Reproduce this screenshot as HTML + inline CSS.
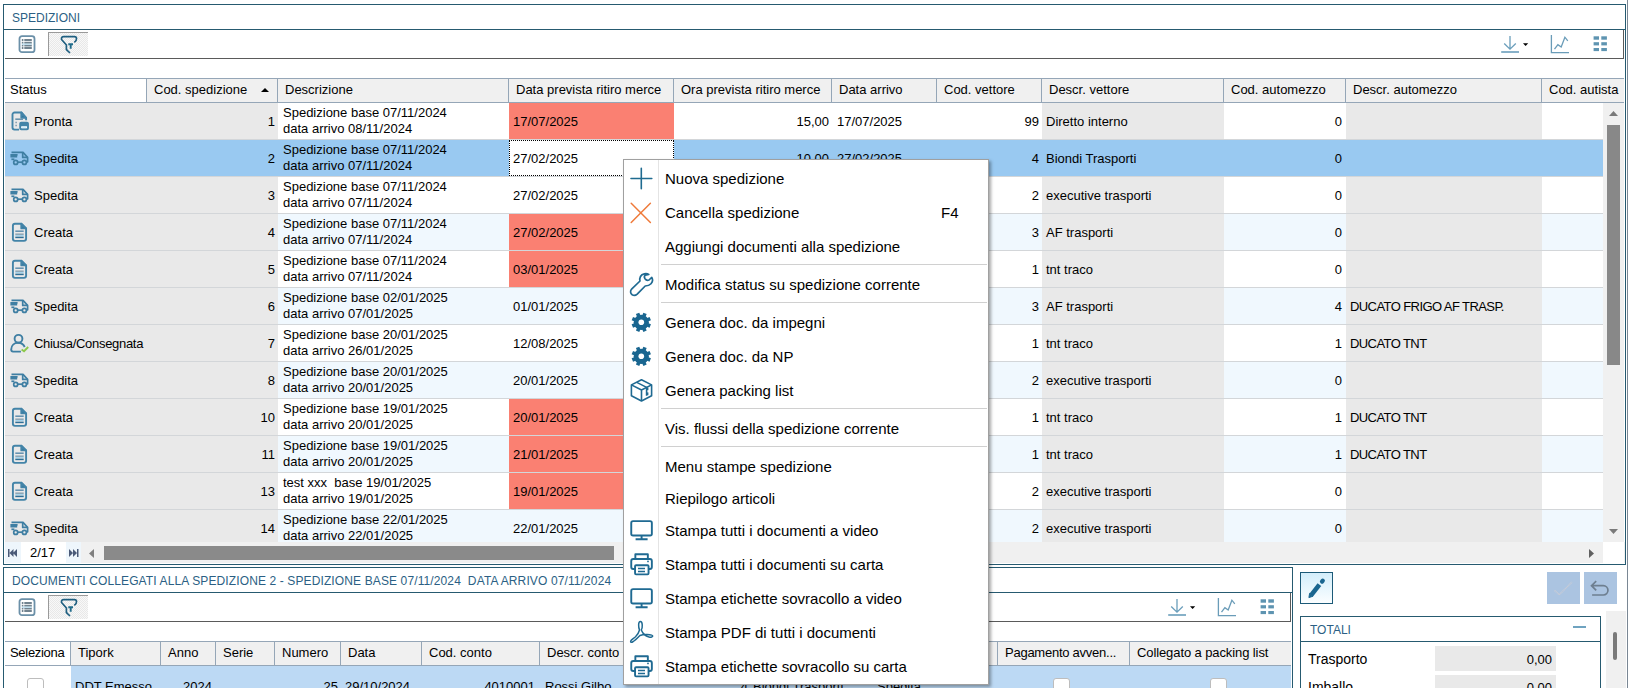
<!DOCTYPE html><html><head><meta charset="utf-8"><style>
html,body{margin:0;padding:0}
body{width:1631px;height:688px;overflow:hidden;position:relative;background:#fff;font-family:"Liberation Sans",sans-serif}
.t{position:absolute;white-space:pre;line-height:1}
.b{position:absolute;box-sizing:border-box}
svg{position:absolute;overflow:visible}
</style></head><body>
<div class="b" style="left:3px;top:4px;width:1623px;height:561px;border:1px solid #265a70"></div>
<div class="t" style="left:12px;top:11.84px;font-size:12px;color:#2b5f84;">SPEDIZIONI</div>
<div class="b" style="left:4px;top:29px;width:1621px;height:1px;background:#265a70"></div>
<div class="b" style="left:5px;top:58px;width:1619px;height:1px;background:#5a5a5a"></div>
<div class="b" style="left:1623px;top:30px;width:1px;height:29px;background:#5a5a5a"></div>
<div class="b" style="left:1627px;top:0px;width:1px;height:688px;background:#7a8794"></div>
<svg style="left:18px;top:35px" width="18" height="18" viewBox="0 0 18 18"><rect x="1.5" y="1.2" width="15" height="16" rx="2.5" fill="none" stroke="#6b90a8" stroke-width="1.8"/><g fill="#72838f"><rect x="3.8" y="4" width="1.6" height="2"/><rect x="6.3" y="4" width="7.5" height="2"/><rect x="3.8" y="6.8" width="1.6" height="1.9"/><rect x="6.3" y="6.8" width="7.5" height="1.9"/><rect x="3.8" y="9.6" width="1.6" height="1.9"/><rect x="6.3" y="9.6" width="7.5" height="1.9"/><rect x="3.8" y="12" width="1.6" height="2"/><rect x="6.3" y="12" width="7.5" height="2"/></g><rect x="4" y="8.6" width="9.5" height="1.2" fill="#bfe3f5"/></svg>
<div class="b" style="left:48px;top:32px;width:40px;height:24px;border-left:1px solid #9a9a9a;border-top:1px solid #9a9a9a;background-color:#f8f8f8;background-image:linear-gradient(45deg,#e8e8e8 25%,transparent 25%,transparent 75%,#e8e8e8 75%),linear-gradient(45deg,#e8e8e8 25%,transparent 25%,transparent 75%,#e8e8e8 75%);background-size:2px 2px;background-position:0 0,1px 1px"></div>
<svg style="left:60px;top:35px" width="18" height="19" viewBox="0 0 18 19"><path d="M6.4 15V10L1.8 4.8C1.2 4 1.2 1.6 3.5 1.6H14.5C17 1.6 17.5 5 14.3 7.4" fill="none" stroke="#1f5f80" stroke-width="1.7"/><path d="M6.4 14.6L10 18" fill="none" stroke="#1f5f80" stroke-width="1.7"/><path d="M8.3 9.3H13M10.7 9.3V13.8" fill="none" stroke="#1f6b8a" stroke-width="1.9"/></svg>
<svg style="left:1500px;top:35px" width="30" height="20" viewBox="0 0 30 20"><g fill="none" stroke="#6a9ebb" stroke-width="1.3"><path d="M10 1V14M4.2 8.5L10 14.2 15.8 8.5"/><path d="M1.2 17H19" stroke-width="1.6"/></g><path d="M23 8.2H28.2L25.6 11z" fill="#000"/></svg>
<svg style="left:1550px;top:35px" width="20" height="20" viewBox="0 0 20 20"><g fill="none" stroke="#6a9cb8" stroke-width="1.3"><path d="M1.4 0V17.6H19"/><path d="M4.5 14.2L7.9 9.6 11.2 12 14.9 2.2 17.8 5.8"/></g></svg>
<svg style="left:1593px;top:36px" width="15" height="16" viewBox="0 0 15 16"><g fill="#5e94b1"><rect x="0.6" y="0.3" width="5.4" height="3.4"/><rect x="8.3" y="0.3" width="5.6" height="3.4"/><rect x="0.6" y="6.2" width="5.4" height="3.2"/><rect x="8.3" y="6.2" width="5.6" height="3.2"/><rect x="0.6" y="12" width="5.4" height="3.1"/><rect x="8.3" y="12" width="5.6" height="3.1"/></g></svg>
<div class="b" style="left:5px;top:78px;width:1619px;height:25px;background:#f0f0f0;border-top:1px solid #95a6b7;border-bottom:1px solid #95a6b7"></div>
<div class="b" style="left:5px;top:79px;width:142px;height:23px;background:#fff"></div>
<div class="b" style="left:146px;top:79px;width:1px;height:23px;background:#95a6b7"></div>
<div class="b" style="left:277px;top:79px;width:1px;height:23px;background:#95a6b7"></div>
<div class="b" style="left:508px;top:79px;width:1px;height:23px;background:#95a6b7"></div>
<div class="b" style="left:673px;top:79px;width:1px;height:23px;background:#95a6b7"></div>
<div class="b" style="left:831px;top:79px;width:1px;height:23px;background:#95a6b7"></div>
<div class="b" style="left:936px;top:79px;width:1px;height:23px;background:#95a6b7"></div>
<div class="b" style="left:1041px;top:79px;width:1px;height:23px;background:#95a6b7"></div>
<div class="b" style="left:1223px;top:79px;width:1px;height:23px;background:#95a6b7"></div>
<div class="b" style="left:1345px;top:79px;width:1px;height:23px;background:#95a6b7"></div>
<div class="b" style="left:1541px;top:79px;width:1px;height:23px;background:#95a6b7"></div>
<div class="t" style="left:10px;top:83.00px;font-size:13px;color:#000;">Status</div>
<div class="t" style="left:154px;top:83.00px;font-size:13px;color:#000;">Cod. spedizione</div>
<div class="t" style="left:285px;top:83.00px;font-size:13px;color:#000;">Descrizione</div>
<div class="t" style="left:516px;top:83.00px;font-size:13px;color:#000;">Data prevista ritiro merce</div>
<div class="t" style="left:681px;top:83.00px;font-size:13px;color:#000;">Ora prevista ritiro merce</div>
<div class="t" style="left:839px;top:83.00px;font-size:13px;color:#000;">Data arrivo</div>
<div class="t" style="left:944px;top:83.00px;font-size:13px;color:#000;">Cod. vettore</div>
<div class="t" style="left:1049px;top:83.00px;font-size:13px;color:#000;">Descr. vettore</div>
<div class="t" style="left:1231px;top:83.00px;font-size:13px;color:#000;">Cod. automezzo</div>
<div class="t" style="left:1353px;top:83.00px;font-size:13px;color:#000;">Descr. automezzo</div>
<div class="t" style="left:1549px;top:83.00px;font-size:13px;color:#000;">Cod. autista</div>
<svg style="left:261px;top:88px" width="8" height="4"><path d="M0 4 L4 0 L8 4Z" fill="#000"/></svg>
<div class="b" style="left:5px;top:103px;width:273px;height:36px;background:#e9e9e9"></div>
<div class="b" style="left:278px;top:103px;width:396px;height:36px;background:#fff"></div>
<div class="b" style="left:509px;top:103px;width:165px;height:36px;background:#fa8072"></div>
<div class="b" style="left:674px;top:103px;width:368px;height:36px;background:#fff"></div>
<div class="b" style="left:1042px;top:103px;width:182px;height:36px;background:#e9e9e9"></div>
<div class="b" style="left:1224px;top:103px;width:122px;height:36px;background:#fff"></div>
<div class="b" style="left:1346px;top:103px;width:196px;height:36px;background:#e9e9e9"></div>
<div class="b" style="left:1542px;top:103px;width:62px;height:36px;background:#fff"></div>
<svg style="left:8px;top:108px" width="24" height="24" viewBox="0 0 24 24"><g fill="none" stroke="#4384a8" stroke-width="1.9" stroke-linejoin="round"><path d="M11 21.6H6.6A2.1 2.1 0 0 1 4.5 19.5V6.6A2.1 2.1 0 0 1 6.6 4.5H13.3L18.1 9.8V12.2"/><path d="M13.3 4.5V9.8H18.1Z" fill="#2b6f98"/><path d="M7.3 11.2H15" stroke="#6a94ae" stroke-width="1.6"/><path d="M7.3 14.6H9M7.3 17.6H9" stroke="#8aa4b4" stroke-width="1.5"/><rect x="12.2" y="14.6" width="7.8" height="6.6" rx="1" fill="#fff"/><path d="M12.2 16.5H20" stroke-width="3.6"/></g><rect x="14" y="18.6" width="4.3" height="1.6" fill="#d9f0fb"/></svg>
<div class="t" style="left:34px;top:114.50px;font-size:13px;color:#000;">Pronta</div>
<div class="t" style="right:1356px;top:114.50px;font-size:13px;color:#000;">1</div>
<div class="t" style="left:283px;top:105.60px;font-size:13px;color:#000;">Spedizione base 07/11/2024</div>
<div class="t" style="left:283px;top:121.90px;font-size:13px;color:#000;">data arrivo 08/11/2024</div>
<div class="t" style="left:513px;top:114.50px;font-size:13px;color:#000;">17/07/2025</div>
<div class="t" style="right:802px;top:114.50px;font-size:13px;color:#000;">15,00</div>
<div class="t" style="left:837px;top:114.50px;font-size:13px;color:#000;">17/07/2025</div>
<div class="t" style="right:592px;top:114.50px;font-size:13px;color:#000;">99</div>
<div class="t" style="left:1046px;top:114.50px;font-size:13px;color:#000;">Diretto interno</div>
<div class="t" style="right:289px;top:114.50px;font-size:13px;color:#000;">0</div>
<div class="b" style="left:5px;top:140px;width:1599px;height:36px;background:#99c9f1"></div>
<div class="b" style="left:509px;top:140px;width:165px;height:36px;background:#fff;border:1px dotted #000"></div>
<div class="b" style="left:5px;top:139px;width:1599px;height:1px;background:#d3d6d9"></div>
<svg style="left:8px;top:146px" width="24" height="24" viewBox="0 0 24 24"><g fill="none" stroke="#3f7fa3" stroke-width="1.7" stroke-linejoin="round"><path d="M3.5 6.3H15L19.6 11.3V15.8H18.6"/><path d="M14.7 6.6V11.4H19.3"/><path d="M2.4 8.9H9.6M2.4 10.6H9.2" stroke-width="1.6"/><path d="M3.4 13.3H6.4"/><circle cx="7.7" cy="16.4" r="2"/><circle cx="16.4" cy="16.4" r="2"/><path d="M9.7 16.2H14.4"/></g></svg>
<div class="t" style="left:34px;top:151.50px;font-size:13px;color:#000;">Spedita</div>
<div class="t" style="right:1356px;top:151.50px;font-size:13px;color:#000;">2</div>
<div class="t" style="left:283px;top:142.60px;font-size:13px;color:#000;">Spedizione base 07/11/2024</div>
<div class="t" style="left:283px;top:158.90px;font-size:13px;color:#000;">data arrivo 07/11/2024</div>
<div class="t" style="left:513px;top:151.50px;font-size:13px;color:#000;">27/02/2025</div>
<div class="t" style="right:802px;top:151.50px;font-size:13px;color:#000;">10,00</div>
<div class="t" style="left:837px;top:151.50px;font-size:13px;color:#000;">27/02/2025</div>
<div class="t" style="right:592px;top:151.50px;font-size:13px;color:#000;">4</div>
<div class="t" style="left:1046px;top:151.50px;font-size:13px;color:#000;">Biondi Trasporti</div>
<div class="t" style="right:289px;top:151.50px;font-size:13px;color:#000;">0</div>
<div class="b" style="left:5px;top:177px;width:273px;height:36px;background:#e9e9e9"></div>
<div class="b" style="left:278px;top:177px;width:396px;height:36px;background:#fff"></div>
<div class="b" style="left:674px;top:177px;width:368px;height:36px;background:#fff"></div>
<div class="b" style="left:1042px;top:177px;width:182px;height:36px;background:#e9e9e9"></div>
<div class="b" style="left:1224px;top:177px;width:122px;height:36px;background:#fff"></div>
<div class="b" style="left:1346px;top:177px;width:196px;height:36px;background:#e9e9e9"></div>
<div class="b" style="left:1542px;top:177px;width:62px;height:36px;background:#fff"></div>
<div class="b" style="left:5px;top:176px;width:1599px;height:1px;background:#d3d6d9"></div>
<svg style="left:8px;top:183px" width="24" height="24" viewBox="0 0 24 24"><g fill="none" stroke="#3f7fa3" stroke-width="1.7" stroke-linejoin="round"><path d="M3.5 6.3H15L19.6 11.3V15.8H18.6"/><path d="M14.7 6.6V11.4H19.3"/><path d="M2.4 8.9H9.6M2.4 10.6H9.2" stroke-width="1.6"/><path d="M3.4 13.3H6.4"/><circle cx="7.7" cy="16.4" r="2"/><circle cx="16.4" cy="16.4" r="2"/><path d="M9.7 16.2H14.4"/></g></svg>
<div class="t" style="left:34px;top:188.50px;font-size:13px;color:#000;">Spedita</div>
<div class="t" style="right:1356px;top:188.50px;font-size:13px;color:#000;">3</div>
<div class="t" style="left:283px;top:179.60px;font-size:13px;color:#000;">Spedizione base 07/11/2024</div>
<div class="t" style="left:283px;top:195.90px;font-size:13px;color:#000;">data arrivo 07/11/2024</div>
<div class="t" style="left:513px;top:188.50px;font-size:13px;color:#000;">27/02/2025</div>
<div class="t" style="right:592px;top:188.50px;font-size:13px;color:#000;">2</div>
<div class="t" style="left:1046px;top:188.50px;font-size:13px;color:#000;">executive trasporti</div>
<div class="t" style="right:289px;top:188.50px;font-size:13px;color:#000;">0</div>
<div class="b" style="left:5px;top:214px;width:273px;height:36px;background:#e9e9e9"></div>
<div class="b" style="left:278px;top:214px;width:396px;height:36px;background:#f0f8fe"></div>
<div class="b" style="left:509px;top:214px;width:165px;height:36px;background:#fa8072"></div>
<div class="b" style="left:674px;top:214px;width:368px;height:36px;background:#f0f8fe"></div>
<div class="b" style="left:1042px;top:214px;width:182px;height:36px;background:#e9e9e9"></div>
<div class="b" style="left:1224px;top:214px;width:122px;height:36px;background:#f0f8fe"></div>
<div class="b" style="left:1346px;top:214px;width:196px;height:36px;background:#e9e9e9"></div>
<div class="b" style="left:1542px;top:214px;width:62px;height:36px;background:#f0f8fe"></div>
<div class="b" style="left:5px;top:213px;width:1599px;height:1px;background:#d3d6d9"></div>
<svg style="left:8px;top:220px" width="24" height="24" viewBox="0 0 24 24"><g fill="none" stroke="#4384a8" stroke-width="1.9" stroke-linejoin="round"><path d="M13.3 3.8H7A2.1 2.1 0 0 0 4.9 5.9V18.8A2.1 2.1 0 0 0 7 20.9H16A2.1 2.1 0 0 0 18.1 18.8V8.4Z"/><path d="M13.3 3.8V8.4H18.1Z" fill="#2b6f98"/><path d="M7.3 11.2H15.7" stroke="#5f8fae" stroke-width="1.5"/><path d="M7.3 14.2H15.7" stroke="#8aa4b4" stroke-width="1.5"/><path d="M7.3 15.6H15.7" stroke="#a6d4ec" stroke-width="1.2"/><path d="M7.3 17.4H15.7" stroke="#2f6f96" stroke-width="1.5"/></g></svg>
<div class="t" style="left:34px;top:225.50px;font-size:13px;color:#000;">Creata</div>
<div class="t" style="right:1356px;top:225.50px;font-size:13px;color:#000;">4</div>
<div class="t" style="left:283px;top:216.60px;font-size:13px;color:#000;">Spedizione base 07/11/2024</div>
<div class="t" style="left:283px;top:232.90px;font-size:13px;color:#000;">data arrivo 07/11/2024</div>
<div class="t" style="left:513px;top:225.50px;font-size:13px;color:#000;">27/02/2025</div>
<div class="t" style="right:592px;top:225.50px;font-size:13px;color:#000;">3</div>
<div class="t" style="left:1046px;top:225.50px;font-size:13px;color:#000;">AF trasporti</div>
<div class="t" style="right:289px;top:225.50px;font-size:13px;color:#000;">0</div>
<div class="b" style="left:5px;top:251px;width:273px;height:36px;background:#e9e9e9"></div>
<div class="b" style="left:278px;top:251px;width:396px;height:36px;background:#fff"></div>
<div class="b" style="left:509px;top:251px;width:165px;height:36px;background:#fa8072"></div>
<div class="b" style="left:674px;top:251px;width:368px;height:36px;background:#fff"></div>
<div class="b" style="left:1042px;top:251px;width:182px;height:36px;background:#e9e9e9"></div>
<div class="b" style="left:1224px;top:251px;width:122px;height:36px;background:#fff"></div>
<div class="b" style="left:1346px;top:251px;width:196px;height:36px;background:#e9e9e9"></div>
<div class="b" style="left:1542px;top:251px;width:62px;height:36px;background:#fff"></div>
<div class="b" style="left:5px;top:250px;width:1599px;height:1px;background:#d3d6d9"></div>
<svg style="left:8px;top:257px" width="24" height="24" viewBox="0 0 24 24"><g fill="none" stroke="#4384a8" stroke-width="1.9" stroke-linejoin="round"><path d="M13.3 3.8H7A2.1 2.1 0 0 0 4.9 5.9V18.8A2.1 2.1 0 0 0 7 20.9H16A2.1 2.1 0 0 0 18.1 18.8V8.4Z"/><path d="M13.3 3.8V8.4H18.1Z" fill="#2b6f98"/><path d="M7.3 11.2H15.7" stroke="#5f8fae" stroke-width="1.5"/><path d="M7.3 14.2H15.7" stroke="#8aa4b4" stroke-width="1.5"/><path d="M7.3 15.6H15.7" stroke="#a6d4ec" stroke-width="1.2"/><path d="M7.3 17.4H15.7" stroke="#2f6f96" stroke-width="1.5"/></g></svg>
<div class="t" style="left:34px;top:262.50px;font-size:13px;color:#000;">Creata</div>
<div class="t" style="right:1356px;top:262.50px;font-size:13px;color:#000;">5</div>
<div class="t" style="left:283px;top:253.60px;font-size:13px;color:#000;">Spedizione base 07/11/2024</div>
<div class="t" style="left:283px;top:269.90px;font-size:13px;color:#000;">data arrivo 07/11/2024</div>
<div class="t" style="left:513px;top:262.50px;font-size:13px;color:#000;">03/01/2025</div>
<div class="t" style="right:592px;top:262.50px;font-size:13px;color:#000;">1</div>
<div class="t" style="left:1046px;top:262.50px;font-size:13px;color:#000;">tnt traco</div>
<div class="t" style="right:289px;top:262.50px;font-size:13px;color:#000;">0</div>
<div class="b" style="left:5px;top:288px;width:273px;height:36px;background:#e9e9e9"></div>
<div class="b" style="left:278px;top:288px;width:396px;height:36px;background:#f0f8fe"></div>
<div class="b" style="left:674px;top:288px;width:368px;height:36px;background:#f0f8fe"></div>
<div class="b" style="left:1042px;top:288px;width:182px;height:36px;background:#e9e9e9"></div>
<div class="b" style="left:1224px;top:288px;width:122px;height:36px;background:#f0f8fe"></div>
<div class="b" style="left:1346px;top:288px;width:196px;height:36px;background:#e9e9e9"></div>
<div class="b" style="left:1542px;top:288px;width:62px;height:36px;background:#f0f8fe"></div>
<div class="b" style="left:5px;top:287px;width:1599px;height:1px;background:#d3d6d9"></div>
<svg style="left:8px;top:294px" width="24" height="24" viewBox="0 0 24 24"><g fill="none" stroke="#3f7fa3" stroke-width="1.7" stroke-linejoin="round"><path d="M3.5 6.3H15L19.6 11.3V15.8H18.6"/><path d="M14.7 6.6V11.4H19.3"/><path d="M2.4 8.9H9.6M2.4 10.6H9.2" stroke-width="1.6"/><path d="M3.4 13.3H6.4"/><circle cx="7.7" cy="16.4" r="2"/><circle cx="16.4" cy="16.4" r="2"/><path d="M9.7 16.2H14.4"/></g></svg>
<div class="t" style="left:34px;top:299.50px;font-size:13px;color:#000;">Spedita</div>
<div class="t" style="right:1356px;top:299.50px;font-size:13px;color:#000;">6</div>
<div class="t" style="left:283px;top:290.60px;font-size:13px;color:#000;">Spedizione base 02/01/2025</div>
<div class="t" style="left:283px;top:306.90px;font-size:13px;color:#000;">data arrivo 07/01/2025</div>
<div class="t" style="left:513px;top:299.50px;font-size:13px;color:#000;">01/01/2025</div>
<div class="t" style="right:592px;top:299.50px;font-size:13px;color:#000;">3</div>
<div class="t" style="left:1046px;top:299.50px;font-size:13px;color:#000;">AF trasporti</div>
<div class="t" style="right:289px;top:299.50px;font-size:13px;color:#000;">4</div>
<div class="t" style="left:1350px;top:299.50px;font-size:13px;color:#000;letter-spacing:-0.58px">DUCATO FRIGO AF TRASP.</div>
<div class="b" style="left:5px;top:325px;width:273px;height:36px;background:#e9e9e9"></div>
<div class="b" style="left:278px;top:325px;width:396px;height:36px;background:#fff"></div>
<div class="b" style="left:674px;top:325px;width:368px;height:36px;background:#fff"></div>
<div class="b" style="left:1042px;top:325px;width:182px;height:36px;background:#e9e9e9"></div>
<div class="b" style="left:1224px;top:325px;width:122px;height:36px;background:#fff"></div>
<div class="b" style="left:1346px;top:325px;width:196px;height:36px;background:#e9e9e9"></div>
<div class="b" style="left:1542px;top:325px;width:62px;height:36px;background:#fff"></div>
<div class="b" style="left:5px;top:324px;width:1599px;height:1px;background:#d3d6d9"></div>
<svg style="left:8px;top:331px" width="24" height="24" viewBox="0 0 24 24"><g fill="none" stroke="#3f7fa3" stroke-width="1.9"><circle cx="10.5" cy="7.8" r="3.9"/><path d="M16.7 16C15.5 13.3 13.2 11.8 10.3 11.8C6.2 11.8 3.2 14.5 3.2 18.6C3.2 19.8 3.8 20.6 5 20.6H12.9"/></g><path d="M13.6 18.5L16 20.2L20.2 16" fill="none" stroke="#8cc84b" stroke-width="1.9"/></svg>
<div class="t" style="left:34px;top:336.50px;font-size:13px;color:#000;letter-spacing:-0.3px">Chiusa/Consegnata</div>
<div class="t" style="right:1356px;top:336.50px;font-size:13px;color:#000;">7</div>
<div class="t" style="left:283px;top:327.60px;font-size:13px;color:#000;">Spedizione base 20/01/2025</div>
<div class="t" style="left:283px;top:343.90px;font-size:13px;color:#000;">data arrivo 26/01/2025</div>
<div class="t" style="left:513px;top:336.50px;font-size:13px;color:#000;">12/08/2025</div>
<div class="t" style="right:592px;top:336.50px;font-size:13px;color:#000;">1</div>
<div class="t" style="left:1046px;top:336.50px;font-size:13px;color:#000;">tnt traco</div>
<div class="t" style="right:289px;top:336.50px;font-size:13px;color:#000;">1</div>
<div class="t" style="left:1350px;top:336.50px;font-size:13px;color:#000;letter-spacing:-0.58px">DUCATO TNT</div>
<div class="b" style="left:5px;top:362px;width:273px;height:36px;background:#e9e9e9"></div>
<div class="b" style="left:278px;top:362px;width:396px;height:36px;background:#f0f8fe"></div>
<div class="b" style="left:674px;top:362px;width:368px;height:36px;background:#f0f8fe"></div>
<div class="b" style="left:1042px;top:362px;width:182px;height:36px;background:#e9e9e9"></div>
<div class="b" style="left:1224px;top:362px;width:122px;height:36px;background:#f0f8fe"></div>
<div class="b" style="left:1346px;top:362px;width:196px;height:36px;background:#e9e9e9"></div>
<div class="b" style="left:1542px;top:362px;width:62px;height:36px;background:#f0f8fe"></div>
<div class="b" style="left:5px;top:361px;width:1599px;height:1px;background:#d3d6d9"></div>
<svg style="left:8px;top:368px" width="24" height="24" viewBox="0 0 24 24"><g fill="none" stroke="#3f7fa3" stroke-width="1.7" stroke-linejoin="round"><path d="M3.5 6.3H15L19.6 11.3V15.8H18.6"/><path d="M14.7 6.6V11.4H19.3"/><path d="M2.4 8.9H9.6M2.4 10.6H9.2" stroke-width="1.6"/><path d="M3.4 13.3H6.4"/><circle cx="7.7" cy="16.4" r="2"/><circle cx="16.4" cy="16.4" r="2"/><path d="M9.7 16.2H14.4"/></g></svg>
<div class="t" style="left:34px;top:373.50px;font-size:13px;color:#000;">Spedita</div>
<div class="t" style="right:1356px;top:373.50px;font-size:13px;color:#000;">8</div>
<div class="t" style="left:283px;top:364.60px;font-size:13px;color:#000;">Spedizione base 20/01/2025</div>
<div class="t" style="left:283px;top:380.90px;font-size:13px;color:#000;">data arrivo 20/01/2025</div>
<div class="t" style="left:513px;top:373.50px;font-size:13px;color:#000;">20/01/2025</div>
<div class="t" style="right:592px;top:373.50px;font-size:13px;color:#000;">2</div>
<div class="t" style="left:1046px;top:373.50px;font-size:13px;color:#000;">executive trasporti</div>
<div class="t" style="right:289px;top:373.50px;font-size:13px;color:#000;">0</div>
<div class="b" style="left:5px;top:399px;width:273px;height:36px;background:#e9e9e9"></div>
<div class="b" style="left:278px;top:399px;width:396px;height:36px;background:#fff"></div>
<div class="b" style="left:509px;top:399px;width:165px;height:36px;background:#fa8072"></div>
<div class="b" style="left:674px;top:399px;width:368px;height:36px;background:#fff"></div>
<div class="b" style="left:1042px;top:399px;width:182px;height:36px;background:#e9e9e9"></div>
<div class="b" style="left:1224px;top:399px;width:122px;height:36px;background:#fff"></div>
<div class="b" style="left:1346px;top:399px;width:196px;height:36px;background:#e9e9e9"></div>
<div class="b" style="left:1542px;top:399px;width:62px;height:36px;background:#fff"></div>
<div class="b" style="left:5px;top:398px;width:1599px;height:1px;background:#d3d6d9"></div>
<svg style="left:8px;top:405px" width="24" height="24" viewBox="0 0 24 24"><g fill="none" stroke="#4384a8" stroke-width="1.9" stroke-linejoin="round"><path d="M13.3 3.8H7A2.1 2.1 0 0 0 4.9 5.9V18.8A2.1 2.1 0 0 0 7 20.9H16A2.1 2.1 0 0 0 18.1 18.8V8.4Z"/><path d="M13.3 3.8V8.4H18.1Z" fill="#2b6f98"/><path d="M7.3 11.2H15.7" stroke="#5f8fae" stroke-width="1.5"/><path d="M7.3 14.2H15.7" stroke="#8aa4b4" stroke-width="1.5"/><path d="M7.3 15.6H15.7" stroke="#a6d4ec" stroke-width="1.2"/><path d="M7.3 17.4H15.7" stroke="#2f6f96" stroke-width="1.5"/></g></svg>
<div class="t" style="left:34px;top:410.50px;font-size:13px;color:#000;">Creata</div>
<div class="t" style="right:1356px;top:410.50px;font-size:13px;color:#000;">10</div>
<div class="t" style="left:283px;top:401.60px;font-size:13px;color:#000;">Spedizione base 19/01/2025</div>
<div class="t" style="left:283px;top:417.90px;font-size:13px;color:#000;">data arrivo 20/01/2025</div>
<div class="t" style="left:513px;top:410.50px;font-size:13px;color:#000;">20/01/2025</div>
<div class="t" style="right:592px;top:410.50px;font-size:13px;color:#000;">1</div>
<div class="t" style="left:1046px;top:410.50px;font-size:13px;color:#000;">tnt traco</div>
<div class="t" style="right:289px;top:410.50px;font-size:13px;color:#000;">1</div>
<div class="t" style="left:1350px;top:410.50px;font-size:13px;color:#000;letter-spacing:-0.58px">DUCATO TNT</div>
<div class="b" style="left:5px;top:436px;width:273px;height:36px;background:#e9e9e9"></div>
<div class="b" style="left:278px;top:436px;width:396px;height:36px;background:#f0f8fe"></div>
<div class="b" style="left:509px;top:436px;width:165px;height:36px;background:#fa8072"></div>
<div class="b" style="left:674px;top:436px;width:368px;height:36px;background:#f0f8fe"></div>
<div class="b" style="left:1042px;top:436px;width:182px;height:36px;background:#e9e9e9"></div>
<div class="b" style="left:1224px;top:436px;width:122px;height:36px;background:#f0f8fe"></div>
<div class="b" style="left:1346px;top:436px;width:196px;height:36px;background:#e9e9e9"></div>
<div class="b" style="left:1542px;top:436px;width:62px;height:36px;background:#f0f8fe"></div>
<div class="b" style="left:5px;top:435px;width:1599px;height:1px;background:#d3d6d9"></div>
<svg style="left:8px;top:442px" width="24" height="24" viewBox="0 0 24 24"><g fill="none" stroke="#4384a8" stroke-width="1.9" stroke-linejoin="round"><path d="M13.3 3.8H7A2.1 2.1 0 0 0 4.9 5.9V18.8A2.1 2.1 0 0 0 7 20.9H16A2.1 2.1 0 0 0 18.1 18.8V8.4Z"/><path d="M13.3 3.8V8.4H18.1Z" fill="#2b6f98"/><path d="M7.3 11.2H15.7" stroke="#5f8fae" stroke-width="1.5"/><path d="M7.3 14.2H15.7" stroke="#8aa4b4" stroke-width="1.5"/><path d="M7.3 15.6H15.7" stroke="#a6d4ec" stroke-width="1.2"/><path d="M7.3 17.4H15.7" stroke="#2f6f96" stroke-width="1.5"/></g></svg>
<div class="t" style="left:34px;top:447.50px;font-size:13px;color:#000;">Creata</div>
<div class="t" style="right:1356px;top:447.50px;font-size:13px;color:#000;">11</div>
<div class="t" style="left:283px;top:438.60px;font-size:13px;color:#000;">Spedizione base 19/01/2025</div>
<div class="t" style="left:283px;top:454.90px;font-size:13px;color:#000;">data arrivo 20/01/2025</div>
<div class="t" style="left:513px;top:447.50px;font-size:13px;color:#000;">21/01/2025</div>
<div class="t" style="right:592px;top:447.50px;font-size:13px;color:#000;">1</div>
<div class="t" style="left:1046px;top:447.50px;font-size:13px;color:#000;">tnt traco</div>
<div class="t" style="right:289px;top:447.50px;font-size:13px;color:#000;">1</div>
<div class="t" style="left:1350px;top:447.50px;font-size:13px;color:#000;letter-spacing:-0.58px">DUCATO TNT</div>
<div class="b" style="left:5px;top:473px;width:273px;height:36px;background:#e9e9e9"></div>
<div class="b" style="left:278px;top:473px;width:396px;height:36px;background:#fff"></div>
<div class="b" style="left:509px;top:473px;width:165px;height:36px;background:#fa8072"></div>
<div class="b" style="left:674px;top:473px;width:368px;height:36px;background:#fff"></div>
<div class="b" style="left:1042px;top:473px;width:182px;height:36px;background:#e9e9e9"></div>
<div class="b" style="left:1224px;top:473px;width:122px;height:36px;background:#fff"></div>
<div class="b" style="left:1346px;top:473px;width:196px;height:36px;background:#e9e9e9"></div>
<div class="b" style="left:1542px;top:473px;width:62px;height:36px;background:#fff"></div>
<div class="b" style="left:5px;top:472px;width:1599px;height:1px;background:#d3d6d9"></div>
<svg style="left:8px;top:479px" width="24" height="24" viewBox="0 0 24 24"><g fill="none" stroke="#4384a8" stroke-width="1.9" stroke-linejoin="round"><path d="M13.3 3.8H7A2.1 2.1 0 0 0 4.9 5.9V18.8A2.1 2.1 0 0 0 7 20.9H16A2.1 2.1 0 0 0 18.1 18.8V8.4Z"/><path d="M13.3 3.8V8.4H18.1Z" fill="#2b6f98"/><path d="M7.3 11.2H15.7" stroke="#5f8fae" stroke-width="1.5"/><path d="M7.3 14.2H15.7" stroke="#8aa4b4" stroke-width="1.5"/><path d="M7.3 15.6H15.7" stroke="#a6d4ec" stroke-width="1.2"/><path d="M7.3 17.4H15.7" stroke="#2f6f96" stroke-width="1.5"/></g></svg>
<div class="t" style="left:34px;top:484.50px;font-size:13px;color:#000;">Creata</div>
<div class="t" style="right:1356px;top:484.50px;font-size:13px;color:#000;">13</div>
<div class="t" style="left:283px;top:475.60px;font-size:13px;color:#000;">test xxx  base 19/01/2025</div>
<div class="t" style="left:283px;top:491.90px;font-size:13px;color:#000;">data arrivo 19/01/2025</div>
<div class="t" style="left:513px;top:484.50px;font-size:13px;color:#000;">19/01/2025</div>
<div class="t" style="right:592px;top:484.50px;font-size:13px;color:#000;">2</div>
<div class="t" style="left:1046px;top:484.50px;font-size:13px;color:#000;">executive trasporti</div>
<div class="t" style="right:289px;top:484.50px;font-size:13px;color:#000;">0</div>
<div class="b" style="left:5px;top:510px;width:273px;height:36px;background:#e9e9e9"></div>
<div class="b" style="left:278px;top:510px;width:396px;height:36px;background:#f0f8fe"></div>
<div class="b" style="left:674px;top:510px;width:368px;height:36px;background:#f0f8fe"></div>
<div class="b" style="left:1042px;top:510px;width:182px;height:36px;background:#e9e9e9"></div>
<div class="b" style="left:1224px;top:510px;width:122px;height:36px;background:#f0f8fe"></div>
<div class="b" style="left:1346px;top:510px;width:196px;height:36px;background:#e9e9e9"></div>
<div class="b" style="left:1542px;top:510px;width:62px;height:36px;background:#f0f8fe"></div>
<div class="b" style="left:5px;top:509px;width:1599px;height:1px;background:#d3d6d9"></div>
<svg style="left:8px;top:516px" width="24" height="24" viewBox="0 0 24 24"><g fill="none" stroke="#3f7fa3" stroke-width="1.7" stroke-linejoin="round"><path d="M3.5 6.3H15L19.6 11.3V15.8H18.6"/><path d="M14.7 6.6V11.4H19.3"/><path d="M2.4 8.9H9.6M2.4 10.6H9.2" stroke-width="1.6"/><path d="M3.4 13.3H6.4"/><circle cx="7.7" cy="16.4" r="2"/><circle cx="16.4" cy="16.4" r="2"/><path d="M9.7 16.2H14.4"/></g></svg>
<div class="t" style="left:34px;top:521.50px;font-size:13px;color:#000;">Spedita</div>
<div class="t" style="right:1356px;top:521.50px;font-size:13px;color:#000;">14</div>
<div class="t" style="left:283px;top:512.60px;font-size:13px;color:#000;">Spedizione base 22/01/2025</div>
<div class="t" style="left:283px;top:528.90px;font-size:13px;color:#000;">data arrivo 22/01/2025</div>
<div class="t" style="left:513px;top:521.50px;font-size:13px;color:#000;">22/01/2025</div>
<div class="t" style="right:592px;top:521.50px;font-size:13px;color:#000;">2</div>
<div class="t" style="left:1046px;top:521.50px;font-size:13px;color:#000;">executive trasporti</div>
<div class="t" style="right:289px;top:521.50px;font-size:13px;color:#000;">0</div>
<div class="b" style="left:5px;top:542px;width:1620px;height:21px;background:#f0f0f0"></div>
<div class="b" style="left:5px;top:542px;width:16px;height:21px;background:#eef6fc"></div>
<div class="b" style="left:21px;top:542px;width:45px;height:21px;background:#fff"></div>
<div class="b" style="left:66px;top:542px;width:15px;height:21px;background:#eef6fc"></div>
<div class="t" style="left:30px;top:546.00px;font-size:13px;color:#000;">2/17</div>
<svg style="left:8px;top:549px" width="10" height="8"><path d="M0 0h1.5v8H0z M1.5 4L5.5 0v8z M5 4L9 0v8z" fill="#4a5a78"/></svg>
<svg style="left:69px;top:549px" width="10" height="8"><path d="M0 0l4 4-4 4z M4 0l4 4-4 4z M8 0h1.5v8H8z" fill="#4a5a78"/></svg>
<svg style="left:89px;top:549px" width="6" height="9"><path d="M5 0v9L0 4.5z" fill="#808080"/></svg>
<div class="b" style="left:104px;top:546px;width:510px;height:14px;background:#8a8a8a"></div>
<svg style="left:1589px;top:549px" width="6" height="9"><path d="M0 0v9l5-4.5z" fill="#606060"/></svg>
<div class="b" style="left:1603px;top:542px;width:21px;height:21px;background:#fff"></div>
<div class="b" style="left:1603px;top:103px;width:21px;height:439px;background:#f0f0f0"></div>
<svg style="left:1609px;top:111px" width="9" height="5"><path d="M0 5L4.5 0 9 5z" fill="#7a7a7a"/></svg>
<div class="b" style="left:1607px;top:125px;width:13px;height:240px;background:#888"></div>
<svg style="left:1609px;top:529px" width="9" height="5"><path d="M0 0L4.5 5 9 0z" fill="#7a7a7a"/></svg>
<div class="b" style="left:3px;top:567px;width:1290px;height:130px;border:1px solid #265a70"></div>
<div class="t" style="left:12px;top:574.84px;font-size:12px;color:#2b5f84;letter-spacing:0.12px">DOCUMENTI COLLEGATI ALLA SPEDIZIONE 2 - SPEDIZIONE BASE 07/11/2024  DATA ARRIVO 07/11/2024</div>
<div class="b" style="left:4px;top:592px;width:1288px;height:1px;background:#265a70"></div>
<div class="b" style="left:5px;top:621px;width:1286px;height:1px;background:#5a5a5a"></div>
<div class="b" style="left:1290px;top:593px;width:1px;height:29px;background:#5a5a5a"></div>
<svg style="left:18px;top:598px" width="18" height="18" viewBox="0 0 18 18"><rect x="1.5" y="1.2" width="15" height="16" rx="2.5" fill="none" stroke="#6b90a8" stroke-width="1.8"/><g fill="#72838f"><rect x="3.8" y="4" width="1.6" height="2"/><rect x="6.3" y="4" width="7.5" height="2"/><rect x="3.8" y="6.8" width="1.6" height="1.9"/><rect x="6.3" y="6.8" width="7.5" height="1.9"/><rect x="3.8" y="9.6" width="1.6" height="1.9"/><rect x="6.3" y="9.6" width="7.5" height="1.9"/><rect x="3.8" y="12" width="1.6" height="2"/><rect x="6.3" y="12" width="7.5" height="2"/></g><rect x="4" y="8.6" width="9.5" height="1.2" fill="#bfe3f5"/></svg>
<div class="b" style="left:48px;top:595px;width:40px;height:24px;border-left:1px solid #9a9a9a;border-top:1px solid #9a9a9a;background-color:#f8f8f8;background-image:linear-gradient(45deg,#e8e8e8 25%,transparent 25%,transparent 75%,#e8e8e8 75%),linear-gradient(45deg,#e8e8e8 25%,transparent 25%,transparent 75%,#e8e8e8 75%);background-size:2px 2px;background-position:0 0,1px 1px"></div>
<svg style="left:60px;top:598px" width="18" height="19" viewBox="0 0 18 19"><path d="M6.4 15V10L1.8 4.8C1.2 4 1.2 1.6 3.5 1.6H14.5C17 1.6 17.5 5 14.3 7.4" fill="none" stroke="#1f5f80" stroke-width="1.7"/><path d="M6.4 14.6L10 18" fill="none" stroke="#1f5f80" stroke-width="1.7"/><path d="M8.3 9.3H13M10.7 9.3V13.8" fill="none" stroke="#1f6b8a" stroke-width="1.9"/></svg>
<svg style="left:1167px;top:598px" width="30" height="20" viewBox="0 0 30 20"><g fill="none" stroke="#6a9ebb" stroke-width="1.3"><path d="M10 1V14M4.2 8.5L10 14.2 15.8 8.5"/><path d="M1.2 17H19" stroke-width="1.6"/></g><path d="M23 8.2H28.2L25.6 11z" fill="#000"/></svg>
<svg style="left:1217px;top:598px" width="20" height="20" viewBox="0 0 20 20"><g fill="none" stroke="#6a9cb8" stroke-width="1.3"><path d="M1.4 0V17.6H19"/><path d="M4.5 14.2L7.9 9.6 11.2 12 14.9 2.2 17.8 5.8"/></g></svg>
<svg style="left:1260px;top:599px" width="15" height="16" viewBox="0 0 15 16"><g fill="#5e94b1"><rect x="0.6" y="0.3" width="5.4" height="3.4"/><rect x="8.3" y="0.3" width="5.6" height="3.4"/><rect x="0.6" y="6.2" width="5.4" height="3.2"/><rect x="8.3" y="6.2" width="5.6" height="3.2"/><rect x="0.6" y="12" width="5.4" height="3.1"/><rect x="8.3" y="12" width="5.6" height="3.1"/></g></svg>
<div class="b" style="left:5px;top:641px;width:1286px;height:25px;background:#f0f0f0;border-top:1px solid #95a6b7;border-bottom:1px solid #95a6b7"></div>
<div class="b" style="left:5px;top:642px;width:66px;height:23px;background:#fff"></div>
<div class="b" style="left:70px;top:642px;width:1px;height:23px;background:#95a6b7"></div>
<div class="b" style="left:160px;top:642px;width:1px;height:23px;background:#95a6b7"></div>
<div class="b" style="left:215px;top:642px;width:1px;height:23px;background:#95a6b7"></div>
<div class="b" style="left:274px;top:642px;width:1px;height:23px;background:#95a6b7"></div>
<div class="b" style="left:340px;top:642px;width:1px;height:23px;background:#95a6b7"></div>
<div class="b" style="left:421px;top:642px;width:1px;height:23px;background:#95a6b7"></div>
<div class="b" style="left:539px;top:642px;width:1px;height:23px;background:#95a6b7"></div>
<div class="t" style="left:10px;top:646.00px;font-size:13px;color:#000;letter-spacing:-0.3px">Seleziona</div>
<div class="t" style="left:78px;top:646.00px;font-size:13px;color:#000;">Tipork</div>
<div class="t" style="left:168px;top:646.00px;font-size:13px;color:#000;">Anno</div>
<div class="t" style="left:223px;top:646.00px;font-size:13px;color:#000;">Serie</div>
<div class="t" style="left:282px;top:646.00px;font-size:13px;color:#000;">Numero</div>
<div class="t" style="left:348px;top:646.00px;font-size:13px;color:#000;">Data</div>
<div class="t" style="left:429px;top:646.00px;font-size:13px;color:#000;">Cod. conto</div>
<div class="t" style="left:547px;top:646.00px;font-size:13px;color:#000;">Descr. conto</div>
<div class="b" style="left:1129px;top:642px;width:1px;height:23px;background:#95a6b7"></div>
<div class="b" style="left:997px;top:642px;width:1px;height:23px;background:#95a6b7"></div>
<div class="t" style="left:1005px;top:646.00px;font-size:13px;color:#000;letter-spacing:-0.25px">Pagamento avven...</div>
<div class="t" style="left:1137px;top:646.00px;font-size:13px;color:#000;letter-spacing:-0.1px">Collegato a packing list</div>
<div class="b" style="left:5px;top:666px;width:1286px;height:22px;background:#bcd9f4"></div>
<div class="b" style="left:5px;top:666px;width:66px;height:22px;background:#fff"></div>
<div class="b" style="left:27px;top:678px;width:17px;height:17px;border:1px solid #bdbdbd;border-radius:3px;background:#fff"></div>
<div class="b" style="left:1053px;top:678px;width:17px;height:17px;border:1px solid #bdbdbd;border-radius:3px;background:#fff"></div>
<div class="b" style="left:1210px;top:678px;width:17px;height:17px;border:1px solid #bdbdbd;border-radius:3px;background:#fff"></div>
<div class="t" style="left:75px;top:680.00px;font-size:13px;color:#000;">DDT Emesso</div>
<div class="t" style="right:1419px;top:680.00px;font-size:13px;color:#000;">2024</div>
<div class="t" style="right:1293px;top:680.00px;font-size:13px;color:#000;">25</div>
<div class="t" style="left:345px;top:680.00px;font-size:13px;color:#000;">29/10/2024</div>
<div class="t" style="right:1096px;top:680.00px;font-size:13px;color:#000;">4010001</div>
<div class="t" style="left:545px;top:680.00px;font-size:13px;color:#000;">Rossi Gilbo</div>
<div class="t" style="right:883px;top:680.00px;font-size:13px;color:#000;">4</div>
<div class="t" style="left:753px;top:680.00px;font-size:13px;color:#000;">Biondi Trasporti</div>
<div class="t" style="left:877px;top:680.00px;font-size:13px;color:#000;">Spedita</div>
<div class="b" style="left:1300px;top:572px;width:33px;height:32px;border:1.5px solid #1c5a78;background:linear-gradient(#d3eefb,#fbfeff)"></div>
<svg style="left:1300px;top:572px" width="33" height="32" viewBox="0 0 33 32"><path d="M11.2 23.2L19.4 12.6" stroke="#1a6690" stroke-width="4.6" stroke-linecap="butt" fill="none"/><path d="M8.9 25.6L9.6 21.4L13 24.2Z" fill="#1a6690" stroke="#1a6690" stroke-width="1" stroke-linejoin="round"/><path d="M22 9.6L22.8 8.6" stroke="#1a6690" stroke-width="4.2" stroke-linecap="round" fill="none"/></svg>
<div class="b" style="left:1547px;top:572px;width:33px;height:32px;background:#abc4e1"></div>
<svg style="left:1547px;top:572px" width="33" height="32" viewBox="0 0 33 32"><path d="M7.6 18.4L12.3 22.7L25 10" stroke="#c9ccd6" stroke-width="1.5" stroke-dasharray="1 0.6" fill="none"/></svg>
<div class="b" style="left:1584px;top:572px;width:33px;height:32px;background:#abc4e1"></div>
<svg style="left:1584px;top:572px" width="33" height="32" viewBox="0 0 33 32"><path d="M12.2 9.1L7.5 13.7L12.2 18.4M7.8 13.7H19.3A4.65 4.65 0 0 1 19.3 23H8.1" stroke="#6e7f90" stroke-width="1.7" fill="none"/></svg>
<div class="b" style="left:1300px;top:616px;width:301px;height:80px;border:1px solid #265a70"></div>
<div class="t" style="left:1310px;top:623.84px;font-size:12px;color:#2b5f84;">TOTALI</div>
<div class="b" style="left:1301px;top:641px;width:299px;height:1px;background:#265a70"></div>
<div class="b" style="left:1573px;top:626px;width:13px;height:2px;background:#6fa3c0"></div>
<div class="t" style="left:1308px;top:652.15px;font-size:14px;color:#000;">Trasporto</div>
<div class="b" style="left:1435px;top:646px;width:121px;height:25px;background:#e9e9e9"></div>
<div class="t" style="right:79px;top:653.00px;font-size:13px;color:#000;">0,00</div>
<div class="t" style="left:1308px;top:680.15px;font-size:14px;color:#000;">Imballo</div>
<div class="b" style="left:1435px;top:675px;width:121px;height:25px;background:#e9e9e9"></div>
<div class="t" style="right:79px;top:681.00px;font-size:13px;color:#000;">0,00</div>
<div class="b" style="left:1606px;top:611px;width:20px;height:77px;background:#f0f0f0"></div>
<div class="b" style="left:1613px;top:632px;width:4px;height:28px;border-radius:2px;background:#7a7a7a"></div>
<div class="b" style="left:623px;top:159px;width:366px;height:526px;background:#fff;border:1px solid #a0a0a0;box-shadow:2px 2px 3px rgba(0,0,0,0.35)"></div>
<div class="b" style="left:658px;top:160px;width:1px;height:524px;background:#e4e4e4"></div>
<div class="t" style="left:665px;top:170.80px;font-size:15px;color:#000;">Nuova spedizione</div>
<svg style="left:630px;top:167px" width="23" height="23" viewBox="0 0 23 23"><path d="M11.3 1.2V21.8M1 11.5H21.8" stroke="#1f6b90" stroke-width="1.6" fill="none" stroke-linecap="round"/></svg>
<div class="t" style="left:665px;top:204.80px;font-size:15px;color:#000;">Cancella spedizione</div>
<div class="t" style="left:941px;top:204.80px;font-size:15px;color:#000;">F4</div>
<svg style="left:630px;top:201px" width="23" height="23" viewBox="0 0 23 23"><path d="M1.2 2.3l19.2 19.2M20.4 2.3L1.2 21.5" stroke="#ef7a3a" stroke-width="1.5" fill="none" stroke-linecap="round"/></svg>
<div class="t" style="left:665px;top:238.80px;font-size:15px;color:#000;">Aggiungi documenti alla spedizione</div>
<div class="b" style="left:661px;top:264px;width:326px;height:1px;background:#d0d0d0"></div>
<div class="t" style="left:665px;top:276.80px;font-size:15px;color:#000;">Modifica status su spedizione corrente</div>
<svg style="left:626px;top:270px" width="32" height="32" viewBox="0 0 32 32"><path d="M22.8 4.4C20.5 3 16 3.5 14.5 6.5C13.5 8.5 13.6 10 14 11L5.6 19.2C4 20.8 4.3 23.5 6.2 24.8C7.8 25.8 9.8 25.4 11.2 24.1L19.2 16C21 16 23.5 15.5 25 13.8C26.6 12 26.8 9.2 25.8 7.4L23 10C21.8 10.5 20 10.2 19 8.8C18.2 7.6 18.3 6 19.3 5.2Z" stroke="#1f6a92" stroke-width="1.7" fill="none" stroke-linejoin="round"/></svg>
<div class="b" style="left:661px;top:302px;width:326px;height:1px;background:#d0d0d0"></div>
<div class="t" style="left:665px;top:314.80px;font-size:15px;color:#000;">Genera doc. da impegni</div>
<svg style="left:626px;top:306px" width="32" height="32" viewBox="0 0 32 32"><g fill="#1a6690"><circle cx="15.3" cy="16.3" r="7.6"/><rect x="13.5" y="6.6" width="3.6" height="4" transform="rotate(22.5 15.3 16.3)"/><rect x="13.5" y="6.6" width="3.6" height="4" transform="rotate(67.5 15.3 16.3)"/><rect x="13.5" y="6.6" width="3.6" height="4" transform="rotate(112.5 15.3 16.3)"/><rect x="13.5" y="6.6" width="3.6" height="4" transform="rotate(157.5 15.3 16.3)"/><rect x="13.5" y="6.6" width="3.6" height="4" transform="rotate(202.5 15.3 16.3)"/><rect x="13.5" y="6.6" width="3.6" height="4" transform="rotate(247.5 15.3 16.3)"/><rect x="13.5" y="6.6" width="3.6" height="4" transform="rotate(292.5 15.3 16.3)"/><rect x="13.5" y="6.6" width="3.6" height="4" transform="rotate(337.5 15.3 16.3)"/></g><circle cx="15.3" cy="16.3" r="2.8" fill="#fff"/></svg>
<div class="t" style="left:665px;top:348.80px;font-size:15px;color:#000;">Genera doc. da NP</div>
<svg style="left:626px;top:340px" width="32" height="32" viewBox="0 0 32 32"><g fill="#1a6690"><circle cx="15.3" cy="16.3" r="7.6"/><rect x="13.5" y="6.6" width="3.6" height="4" transform="rotate(22.5 15.3 16.3)"/><rect x="13.5" y="6.6" width="3.6" height="4" transform="rotate(67.5 15.3 16.3)"/><rect x="13.5" y="6.6" width="3.6" height="4" transform="rotate(112.5 15.3 16.3)"/><rect x="13.5" y="6.6" width="3.6" height="4" transform="rotate(157.5 15.3 16.3)"/><rect x="13.5" y="6.6" width="3.6" height="4" transform="rotate(202.5 15.3 16.3)"/><rect x="13.5" y="6.6" width="3.6" height="4" transform="rotate(247.5 15.3 16.3)"/><rect x="13.5" y="6.6" width="3.6" height="4" transform="rotate(292.5 15.3 16.3)"/><rect x="13.5" y="6.6" width="3.6" height="4" transform="rotate(337.5 15.3 16.3)"/></g><circle cx="15.3" cy="16.3" r="2.8" fill="#fff"/></svg>
<div class="t" style="left:665px;top:382.80px;font-size:15px;color:#000;">Genera packing list</div>
<svg style="left:626px;top:374px" width="32" height="32" viewBox="0 0 32 32"><g fill="none" stroke="#1f6a92" stroke-width="1.6" stroke-linejoin="round"><path d="M15.5 5.8L25.6 10.9V21.8L15.5 27L5.4 21.8V10.9Z"/><path d="M5.4 10.9L15.5 16L25.6 10.9M15.5 16V27"/><path d="M10.8 8.4L20.6 13.4V21.8"/></g><g fill="#1f6a92"><rect x="20.4" y="13.6" width="2" height="2.6"/><rect x="20.4" y="18.4" width="2" height="2.8"/></g></svg>
<div class="b" style="left:661px;top:408px;width:326px;height:1px;background:#d0d0d0"></div>
<div class="t" style="left:665px;top:420.80px;font-size:15px;color:#000;">Vis. flussi della spedizione corrente</div>
<div class="b" style="left:661px;top:446px;width:326px;height:1px;background:#d0d0d0"></div>
<div class="t" style="left:665px;top:458.80px;font-size:15px;color:#000;">Menu stampe spedizione</div>
<div class="t" style="left:665px;top:490.80px;font-size:15px;color:#000;">Riepilogo articoli</div>
<div class="t" style="left:665px;top:522.80px;font-size:15px;color:#000;">Stampa tutti i documenti a video</div>
<svg style="left:626px;top:514px" width="32" height="32" viewBox="0 0 32 32"><g fill="none" stroke="#1f6a92" stroke-width="1.9"><rect x="5.25" y="7.15" width="20.6" height="14.4" rx="1.8"/><path d="M15.6 21.5v3.5M9.6 25.3h12"/></g></svg>
<div class="t" style="left:665px;top:556.80px;font-size:15px;color:#000;">Stampa tutti i documenti su carta</div>
<svg style="left:626px;top:548px" width="32" height="32" viewBox="0 0 32 32"><g fill="none" stroke="#1f6a92" stroke-width="1.9" stroke-linejoin="round"><path d="M9.35 11V6.25h12.5V11"/><rect x="5.25" y="10.95" width="20.6" height="10.1" rx="2"/><rect x="9.05" y="17.25" width="13.5" height="9.1" rx="1" fill="#fff"/><path d="M12 20.6h7M12 23.5h7" stroke-width="1.5"/></g><circle cx="22" cy="13.4" r="0.9" fill="#1f6a92"/></svg>
<div class="t" style="left:665px;top:590.80px;font-size:15px;color:#000;">Stampa etichette sovracollo a video</div>
<svg style="left:626px;top:582px" width="32" height="32" viewBox="0 0 32 32"><g fill="none" stroke="#1f6a92" stroke-width="1.9"><rect x="5.25" y="7.15" width="20.6" height="14.4" rx="1.8"/><path d="M15.6 21.5v3.5M9.6 25.3h12"/></g></svg>
<div class="t" style="left:665px;top:624.80px;font-size:15px;color:#000;">Stampa PDF di tutti i documenti</div>
<svg style="left:626px;top:616px" width="32" height="32" viewBox="0 0 32 32"><path d="M15.35 13.95C16.6 12 16.8 5.6 14.4 5.6C12 5.6 12.4 11 13.5 13.95C12.8 16.5 11.5 19 9.5 20.8C7.5 22.5 5 23.8 4.65 25.1C4.4 26.3 5.5 26.6 6.5 26C8.5 24.8 11.5 22 13.95 19.5C16 18.6 18.5 18.3 21 18.4C23.5 18.5 26.7 19 26.7 20C26.7 21 25 21.5 23 21C20.5 20.5 18 19 16.7 16.7C16.2 15.8 15.7 14.8 15.35 13.95Z" stroke="#1f6a92" stroke-width="1.5" fill="none" stroke-linejoin="round"/></svg>
<div class="t" style="left:665px;top:658.80px;font-size:15px;color:#000;">Stampa etichette sovracollo su carta</div>
<svg style="left:626px;top:650px" width="32" height="32" viewBox="0 0 32 32"><g fill="none" stroke="#1f6a92" stroke-width="1.9" stroke-linejoin="round"><path d="M9.35 11V6.25h12.5V11"/><rect x="5.25" y="10.95" width="20.6" height="10.1" rx="2"/><rect x="9.05" y="17.25" width="13.5" height="9.1" rx="1" fill="#fff"/><path d="M12 20.6h7M12 23.5h7" stroke-width="1.5"/></g><circle cx="22" cy="13.4" r="0.9" fill="#1f6a92"/></svg>
</body></html>
